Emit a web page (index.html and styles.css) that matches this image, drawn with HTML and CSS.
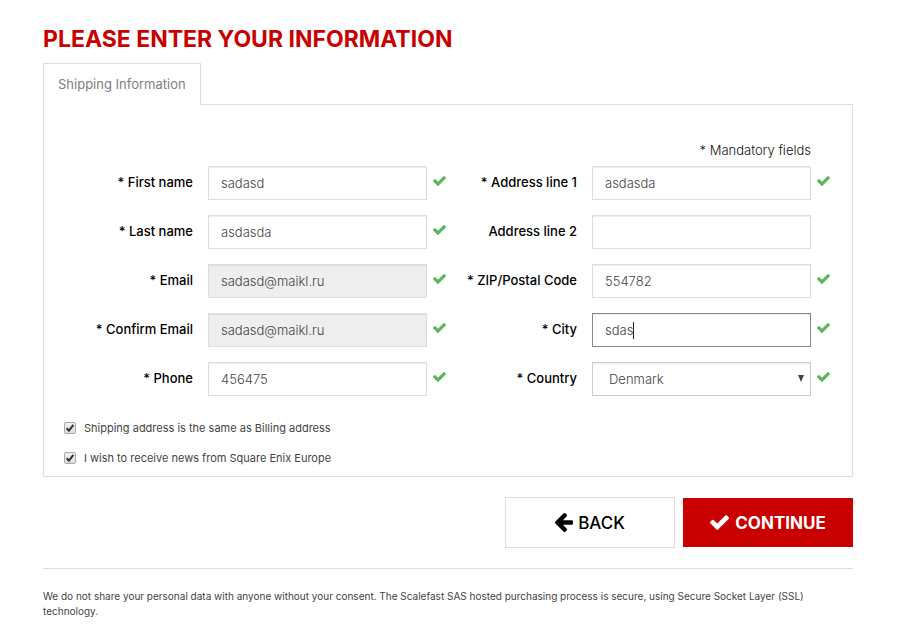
FILE: index.html
```html
<!DOCTYPE html>
<html lang="en">
<head>
<meta charset="utf-8">
<title>Please enter your information</title>
<link rel="stylesheet" href="styles.css">
</head>
<body>
<svg class="sprite" aria-hidden="true">
  <symbol id="check" viewBox="0 0 1550 1188"><path d="M1550 232q0 40-28 68L798 1024l-136 136q-28 28-68 28t-68-28L390 1024 28 662Q0 634 0 594t28-68l136-136q28-28 68-28t68 28l294 295L1250 28q28-28 68-28t68 28l136 136q28 28 28 68z"/></symbol>
  <symbol id="arrow" viewBox="0 0 1472 1480"><path d="M1472 740v64q0 53-32 90t-84 38H652l293 294q38 36 38 90t-38 90l-75 76q-37 37-90 37-52 0-91-37L38 830Q0 794 0 740q0-53 38-91L689-1q38-37 91-37 52 0 90 37l75 74q38 38 38 91t-38 91L652 548h704q52 0 84 38t32 90z"/></symbol>
</svg>
<main class="page">
  <h1 class="title">PLEASE ENTER YOUR INFORMATION</h1>
  <form class="form">
    <div class="tabs"><button class="tab" type="button">Shipping Information</button></div>
    <section class="panel">
      <p class="mandatory">* Mandatory fields</p>
      <div class="columns">
        <div class="column">
          <div class="field"><label for="first">* First name</label><input id="first" type="text" value="sadasd"><svg class="valid"><use href="#check"/></svg></div>
          <div class="field"><label for="last">* Last name</label><input id="last" type="text" value="asdasda"><svg class="valid"><use href="#check"/></svg></div>
          <div class="field"><label for="email">* Email</label><input id="email" type="email" value="sadasd@maikl.ru" readonly><svg class="valid"><use href="#check"/></svg></div>
          <div class="field"><label for="confirm">* Confirm Email</label><input id="confirm" type="email" value="sadasd@maikl.ru" readonly><svg class="valid"><use href="#check"/></svg></div>
          <div class="field"><label for="phone">* Phone</label><input id="phone" type="tel" value="456475"><svg class="valid"><use href="#check"/></svg></div>
        </div>
        <div class="column">
          <div class="field"><label for="addr1">* Address line 1</label><input id="addr1" type="text" value="asdasda"><svg class="valid"><use href="#check"/></svg></div>
          <div class="field"><label for="addr2">Address line 2</label><input id="addr2" type="text"></div>
          <div class="field"><label for="zip">* ZIP/Postal Code</label><input id="zip" type="text" value="554782"><svg class="valid"><use href="#check"/></svg></div>
          <div class="field"><label for="city">* City</label><div class="active"><input id="city" type="text" value="sdas"><span class="caret"></span></div><svg class="valid"><use href="#check"/></svg></div>
          <div class="field"><label for="country">* Country</label><div class="active"><select id="country"><option>Denmark</option></select><svg class="drop" viewBox="0 0 6 7"><path d="M0 0h6L3 7z"/></svg></div><svg class="valid"><use href="#check"/></svg></div>
        </div>
      </div>
      <div class="options">
        <label class="option"><span class="box"><input type="checkbox" checked><svg viewBox="0 0 12 12"><path d="M2.6 6.2l2.3 2.5L9.4 2.8"/></svg></span>Shipping address is the same as Billing address</label>
        <label class="option"><span class="box"><input type="checkbox" checked><svg viewBox="0 0 12 12"><path d="M2.6 6.2l2.3 2.5L9.4 2.8"/></svg></span>I wish to receive news from Square Enix Europe</label>
      </div>
    </section>
    <div class="actions">
      <button class="btn back" type="button"><svg class="arrow"><use href="#arrow"/></svg>BACK</button>
      <button class="btn continue" type="submit"><svg class="tick"><use href="#check"/></svg>CONTINUE</button>
    </div>
  </form>
  <footer class="note">We do not share your personal data with anyone without your consent. The Scalefast SAS hosted purchasing process is secure, using Secure Socket Layer (SSL) technology.</footer>
</main>
</body>
</html>
```
FILE: styles.css
```css
* { box-sizing: border-box; }
body { margin: 0; background: #fff; color: #333; font-family: Inter, "Open Sans", sans-serif; font-size: 13px; }
input, select, button { font-family: inherit; margin: 0; border-radius: 0; }
.sprite { display: none; }
.page { padding: 24px 58px 12px 43px; }
.title { margin: 0; color: #c80000; font-size: 23px; line-height: 30px; font-weight: 700; white-space: nowrap; }
.tabs { display: flex; margin-top: 9px; }
.tab { height: 42px; padding: 0 14px 2px; border: 1px solid #ddd; border-bottom: 0; background: #fff; color: #808080; font-size: 13px; margin-bottom: -1px; z-index: 1; }
.panel { border: 1px solid #ddd; padding: 36px 7px 9px 33px; }
.mandatory { margin: 0 34px 7px 0; line-height: 18px; text-align: right; font-weight: 300; color: #111; }
.columns { display: grid; grid-template-columns: 1fr 1fr; }
.column { display: grid; gap: 15px; }
.field { display: grid; grid-template-columns: 116px 1fr 13px; padding-right: 15px; }
.field label { color: #000; font-weight: 500; text-align: right; line-height: 18px; padding: 7px 0 9px; white-space: nowrap; }
.field input, .field select { width: 100%; min-width: 0; height: 34px; padding: 0 12px; border: 1px solid #ddd; background: #fff; color: #444; font-size: 13px; font-weight: 300; outline: 0; box-shadow: inset 0 1px 1px rgba(0,0,0,.075); }
.field > input, .active { margin: 0 6px 0 15px; width: auto; }
.field input[readonly] { background: #eee; }
.active { position: relative; }
.active input { border-color: #888; }
.active select { appearance: none; padding: 0 16px; border-color: #ccc; }
.caret { position: absolute; left: 41px; top: 9px; width: 1px; height: 17px; background: #222; }
.drop { position: absolute; right: 7px; top: 13px; width: 6px; height: 7px; fill: #444; }
.valid { width: 13px; height: 10px; margin-top: 10px; fill: #5cb360; }
.options { display: grid; gap: 12px; margin: 23px 0 0 -13px; }
.option { display: flex; align-items: center; gap: 8px; font-size: 11px; line-height: 18px; color: #444; }
.box { display: grid; width: 12px; height: 12px; }
.box input { grid-area: 1 / 1; appearance: none; width: 12px; height: 12px; border: 1px solid #aaa; border-radius: 2px; background: linear-gradient(#f0f0f0, #ddd); }
.box svg { grid-area: 1 / 1; z-index: 1; pointer-events: none; fill: none; stroke: #333; stroke-width: 2; }
.actions { display: flex; justify-content: flex-end; align-items: center; gap: 8px; margin-top: 20px; }
.btn { display: flex; align-items: center; justify-content: center; width: 170px; height: 51px; padding: 0; font-size: 17px; }
.back { border: 1px solid #ddd; background: #fff; color: #000; font-weight: 500; gap: 5px; }
.continue { height: 49px; border: 0; background: #c80000; color: #fff; font-weight: 700; gap: 6px; }
.arrow { width: 18px; height: 19px; overflow: visible; }
.tick { width: 19px; height: 15px; fill: #fff; }
.note { margin-top: 20px; padding-top: 20px; border-top: 1px solid #ddd; font-size: 10px; line-height: 15px; color: #444; }
```
